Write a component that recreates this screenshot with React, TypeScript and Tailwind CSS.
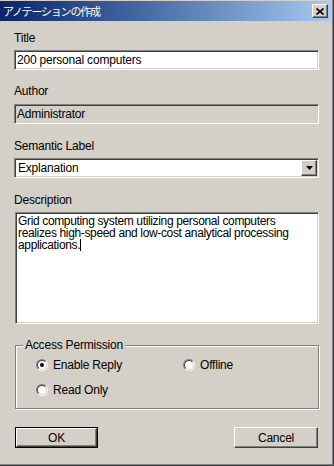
import React from "react";

const sunken =
  "border border-t-[#808080] border-l-[#808080] border-r-white border-b-white shadow-[inset_1px_1px_0_#404040,inset_-1px_-1px_0_#d4d0c8]";
const raised =
  "border border-t-white border-l-white border-r-[#404040] border-b-[#404040] shadow-[inset_-1px_-1px_0_#808080,inset_1px_1px_0_#d4d0c8]";

function Radio({ label, checked }: { label: string; checked?: boolean }) {
  return (
    <div className="flex items-center h-[14px]">
      <div className="w-[12px] h-[12px] rounded-full border border-t-[#808080] border-l-[#808080] border-r-white border-b-white">
        <div className="w-full h-full rounded-full border border-t-[#404040] border-l-[#404040] border-r-[#d4d0c8] border-b-[#d4d0c8] bg-white flex items-center justify-center">
          {checked && <div className="w-[4px] h-[4px] rounded-full bg-black" />}
        </div>
      </div>
      <span className="ml-[5px] leading-[14px]">{label}</span>
    </div>
  );
}

export default function App() {
  return (
    <div className="w-[334px] h-[466px] bg-[#d4d0c8] border-r border-b border-[#404040] shadow-[inset_-1px_-1px_0_#808080] font-['Liberation_Sans',Arial,sans-serif] text-[12px] tracking-[-0.2px] text-black flex flex-col">
      {/* Title bar */}
      <div className="h-[20px] mr-[2px] mt-[1px] flex items-center justify-between pl-[3px] pr-[3px] bg-gradient-to-r from-[#0a246a] to-[#a6caf0]">
        <span className="text-white text-[11px] tracking-[-1.2px] leading-[14px] font-['Noto_Sans_CJK_JP',sans-serif]">
          アノテーションの作成
        </span>
        <button className={`w-[16px] h-[14px] bg-[#d4d0c8] flex items-center justify-center ${raised}`}>
          <svg width="8" height="7" viewBox="0 0 8 7">
            <path d="M0.5 0.5 L7.5 6.5 M7.5 0.5 L0.5 6.5" stroke="black" strokeWidth="1.6" />
          </svg>
        </button>
      </div>

      <div className="flex flex-col pl-[14px]">
        <div className="mt-[10px] leading-[14px]">Title</div>
        <div className={`mt-[5px] w-[305px] h-[20px] bg-white flex items-center pl-[2px] ${sunken}`}>
          <span className="leading-[14px]">200 personal computers</span>
        </div>

        <div className="mt-[14px] leading-[14px]">Author</div>
        <div className={`mt-[6px] w-[305px] h-[20px] bg-[#d4d0c8] flex items-center pl-[2px] ${sunken}`}>
          <span className="leading-[14px]">Administrator</span>
        </div>

        <div className="mt-[15px] leading-[14px]">Semantic Label</div>
        <div className={`mt-[5px] w-[305px] h-[20px] bg-white flex items-center justify-between pl-[3px] pr-px ${sunken}`}>
          <span className="leading-[14px]">Explanation</span>
          <div className={`w-[16px] h-[16px] bg-[#d4d0c8] flex items-center justify-center ${raised}`}>
            <svg width="7" height="4" viewBox="0 0 7 4">
              <path d="M0 0 H7 L3.5 4 Z" fill="black" />
            </svg>
          </div>
        </div>

        <div className="mt-[15px] leading-[14px]">Description</div>
        <div className={`mt-[5px] ml-px w-[304px] h-[112px] bg-white pl-[2px] pt-[2px] pr-[4px] leading-[12px] tracking-[-0.35px] ${sunken}`}>
          Grid computing system utilizing personal computers realizes high-speed and low-cost analytical processing applications.
          <span className="inline-block w-px h-[12px] bg-black align-top" />
        </div>

        <fieldset className="mt-[14px] ml-px w-[304px] border border-[#808080] shadow-[1px_1px_0_white,inset_1px_1px_0_white] pl-[20px] pt-[6px] pb-[11px]">
          <legend className="-ml-[13px] px-[2px] bg-[#d4d0c8] leading-[14px]">Access Permission</legend>
          <div className="flex">
            <div className="w-[147px]">
              <Radio label="Enable Reply" checked />
            </div>
            <Radio label="Offline" />
          </div>
          <div className="mt-[11px]">
            <Radio label="Read Only" />
          </div>
        </fieldset>

        <div className="mt-[18px] ml-px flex items-center">
          <div className="w-[83px] h-[21px] border border-black">
            <div className={`w-full h-full bg-[#d4d0c8] flex items-center justify-center ${raised}`}>OK</div>
          </div>
          <button className={`ml-[136px] w-[84px] h-[21px] bg-[#d4d0c8] flex items-center justify-center ${raised}`}>
            Cancel
          </button>
        </div>
      </div>
    </div>
  );
}
